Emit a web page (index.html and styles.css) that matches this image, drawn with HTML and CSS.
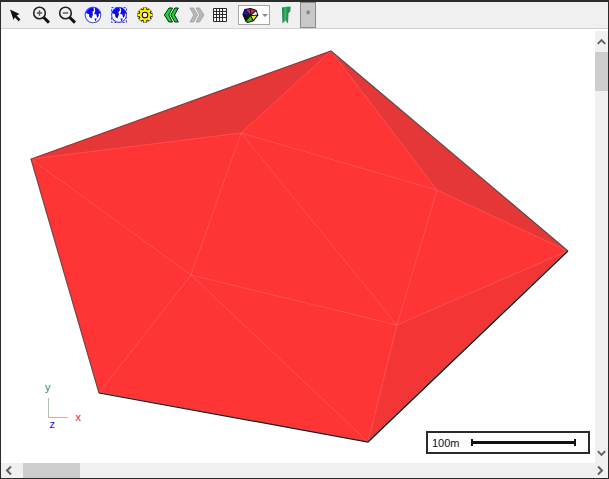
FILE: index.html
```html
<!DOCTYPE html>
<html lang="en">
<head>
<meta charset="utf-8">
<title>Mesh view</title>
<link rel="stylesheet" href="styles.css">
</head>
<body>
<div class="frame">
  <div class="toolbar">
    <span class="tool">
      <svg class="icon" viewBox="0 0 20 20"><path class="ink" d="M5 4.5 L14.5 9 L11.6 10.4 L15.5 14.4 L13.6 16.2 L9.8 12.2 L8.6 15 Z"/></svg>
    </span>
    <span class="tool">
      <svg class="icon" viewBox="0 0 20 20"><circle class="lens" cx="8.500" cy="8" r="5.800"/><path class="handle" d="M12.800 12.500 L18 17.600"/><path class="sign" d="M5.800 8 H11.200 M8.500 5.300 V10.700"/></svg>
    </span>
    <span class="tool">
      <svg class="icon" viewBox="0 0 20 20"><circle class="lens" cx="8.500" cy="8" r="5.800"/><path class="handle" d="M12.800 12.500 L18 17.600"/><path class="sign" d="M5.800 8 H11.200"/></svg>
    </span>
    <span class="tool">
      <svg class="icon" viewBox="0 0 20 20"><circle class="globe-ring" cx="10" cy="10" r="7.800"/><path class="globe-land" d="M3 8 C4 4.500 7 2.400 10.400 2.400 L11 5.400 L9.400 7 L10 9.400 L8.400 13.400 L6.400 12 L6 9.200 Z M11.800 2.600 C14.400 3.200 17 5.600 17.600 9 L15.800 8.200 L15.800 11 L14.200 13 L13.400 9.400 L11.200 9 L12.200 6 Z M11.400 13.400 L13.800 13.600 L12.400 16.400 Z"/></svg>
    </span>
    <span class="tool">
      <svg class="icon" viewBox="0 0 20 20"><rect class="select-box" x="2.500" y="2.500" width="15" height="15"/><circle class="globe-ring" cx="10" cy="10" r="7.400"/><path class="globe-land" d="M3 8 C4 4.500 7 2.400 10.400 2.400 L11 5.400 L9.400 7 L10 9.400 L8.400 13.400 L6.400 12 L6 9.200 Z M11.800 2.600 C14.400 3.200 17 5.600 17.600 9 L15.800 8.200 L15.800 11 L14.200 13 L13.400 9.400 L11.200 9 L12.200 6 Z M11.400 13.400 L13.800 13.600 L12.400 16.400 Z"/></svg>
    </span>
    <span class="tool">
      <svg class="icon" viewBox="0 0 20 20"><path class="gear-teeth" d="M10 2.500 V17.500 M2.500 10 H17.500 M4.700 4.700 L15.300 15.300 M15.300 4.700 L4.700 15.300"/><circle class="gear-body" cx="10" cy="10" r="6"/><path class="gear-fill" d="M10 2.800 V17.200 M2.800 10 H17.200 M4.900 4.900 L15.100 15.100 M15.100 4.900 L4.900 15.100"/><circle class="gear-core" cx="10" cy="10" r="5.400"/><circle class="gear-hole" cx="10" cy="10" r="2.800"/></svg>
    </span>
    <span class="tool">
      <svg class="icon" viewBox="0 0 20 20"><path class="chev-green" d="M8 3 H11.500 L7.800 10 L11.500 17 H8 L3.400 10 Z M13.800 3 H17.300 L13.500 10 L17.300 17 H13.800 L9.800 10 Z"/></svg>
    </span>
    <span class="tool">
      <svg class="icon" viewBox="0 0 20 20"><path class="chev-grey" d="M3 3 H6.500 L10.600 10 L6.500 17 H3 L6.800 10 Z M9 3 H12.500 L17 10 L12.500 17 H9 L12.800 10 Z"/></svg>
    </span>
    <span class="tool tool-grid">
      <svg class="icon" viewBox="0 0 20 20"><path class="grid-lines" d="M3.500 3.500 H16.500 V16.500 H3.500 Z M3.500 6.500 H16.500 M3.500 9.500 H16.500 M3.500 12.500 H16.500 M6.500 3.500 V16.500 M9.500 3.500 V16.500 M12.500 3.500 V16.500"/></svg>
    </span>
    <span class="combo">
      <svg class="pie" viewBox="0 0 18 18">
        <path class="pie-red" d="M9 9 L9 1.500 L15 3.500 Z"/>
        <path class="pie-purple" d="M9 9 L3 2.600 L9 1.500 Z"/>
        <path class="pie-blue" d="M9 9 L1 8 L3 2.600 Z"/>
        <path class="pie-black" d="M9 9 L4 15 L1 8 Z"/>
        <path class="pie-green" d="M9 9 L12 14.600 L6 16.400 L4 15 Z"/>
        <path class="pie-yellow" d="M9 9 L16.800 8.600 L12 14.600 Z"/>
        <path class="pie-white" d="M9 9 L15 3.500 L16.800 8.600 Z"/>
        <path class="pie-edge" d="M9 1.500 L15 3.500 L16.800 8.600 L12 14.600 L6 16.400 L4 15 L1 8 L3 2.600 Z M9 9 L9 1.500 M9 9 L3 2.600 M9 9 L1 8 M9 9 L4 15 M9 9 L12 14.600 M9 9 L16.800 8.600 M9 9 L15 3.500"/>
      </svg>
      <span class="caret"></span>
    </span>
    <span class="tool tool-mark">
      <svg class="icon" viewBox="0 0 20 20">
        <defs>
          <linearGradient id="markShade" x1="0" x2="1" y1="0" y2="0">
            <stop offset="0" stop-color="#0f6f38"/>
            <stop offset=".35" stop-color="#3fb872"/>
            <stop offset=".7" stop-color="#14893f"/>
            <stop offset="1" stop-color="#5cbc84"/>
          </linearGradient>
        </defs>
        <path class="mark-fill" d="M6 2.500 C9 1.500 12 2 15 1.500 L14.500 6.500 L12.500 8 L12 18.500 L9.500 15.500 L6.500 18.500 Z"/>
      </svg>
    </span>
    <span class="overflow">*</span>
  </div>
  <div class="workspace">
    <div class="canvas">
      <svg class="scene" viewBox="0 0 594 433" aria-label="Triangulated surface">
        <g transform="translate(-1 -29)">
          <polygon class="face" points="31,159 331,51 568,251 368,442 99,393"/>
          <polygon class="face-dark" points="31,159 331,51 241,133"/>
          <polygon class="face-dark" points="331,51 568,251 437,190"/>
          <polygon class="face-mid" points="397,325 568,251 368,442"/>
          <path class="edge" d="M31 159 L241 133 L331 51 L437 190 L568 251 L397 325 L368 442 M241 133 L437 190 L397 325 L191 275 L241 133 L397 325 M31 159 L191 275 L99 393 M191 275 L368 442"/>
          <path class="rim-top" d="M99 393 L31 159 L331 51 L568 251"/>
          <path class="rim-low" d="M568 251 L368 442 L99 393"/>
          <path class="axis-y" d="M48.500 398 V417"/>
          <path class="axis-x" d="M48 417.500 H68"/>
          <text class="label label-y" x="45" y="391">y</text>
          <text class="label label-x" x="75.500" y="421">x</text>
          <text class="label label-z" x="49.500" y="428">z</text>
        </g>
      </svg>
      <div class="legend">
        <span class="legend-text">100m</span>
        <span class="legend-bar"></span>
      </div>
    </div>
    <div class="vscroll">
      <span class="arrow"><svg viewBox="0 0 14 21"><path class="chev" d="M3 13 L7 9 L11 13"/></svg></span>
      <span class="vthumb"></span>
      <span class="vspace"></span>
      <span class="arrow"><svg viewBox="0 0 14 21"><path class="chev" d="M3 9 L7 13 L11 9"/></svg></span>
    </div>
  </div>
  <div class="hscroll">
    <span class="arrow-h"><svg viewBox="0 0 22 15"><path class="chev" d="M10 3.500 L6 7.500 L10 11.500"/></svg></span>
    <span class="hthumb"></span>
    <span class="hspace"></span>
    <span class="arrow-h"><svg viewBox="0 0 22 15"><path class="chev" d="M12 3.500 L16 7.500 L12 11.500"/></svg></span>
  </div>
</div>
</body>
</html>
```
FILE: styles.css
```css
* { box-sizing: border-box; }
html, body { margin: 0; padding: 0; background: #fff; }
body { width: 609px; height: 479px; overflow: hidden; font-family: "Liberation Sans", Arial, sans-serif; }

.frame {
  width: 609px;
  height: 479px;
  display: flex;
  flex-direction: column;
  border: 1px solid #2b2b2b;
  border-top-width: 2px;
  background: #fff;
}

.toolbar {
  height: 27px;
  flex: none;
  display: flex;
  align-items: center;
  padding-left: 1px;
  background: #f0f0f0;
  border-bottom: 1px solid #d0d0d0;
}
.tool { width: 26px; height: 26px; display: flex; align-items: center; justify-content: center; flex: none; }
.tool-grid { width: 20px; }
.tool-mark { width: 20px; margin-left: 6px; }
.icon { width: 20px; height: 20px; display: block; }

.ink { fill: #111; }
.lens { fill: #f0f0f0; stroke: #222; stroke-width: 1.6; }
.handle { stroke: #111; stroke-width: 3; fill: none; }
.sign { stroke: #555; stroke-width: 1.4; fill: none; }
.globe-ring { fill: #fff; stroke: #4a4aff; stroke-width: 1.1; }
.globe-land { fill: #0a0aee; }
.select-box { fill: #d6d6ff; stroke: #3a3aff; stroke-width: 1; stroke-dasharray: 2 2; }
.gear-teeth { stroke: #111; stroke-width: 4.4; fill: none; }
.gear-body { fill: #111; }
.gear-fill { stroke: #ffee00; stroke-width: 2.6; fill: none; }
.gear-core { fill: #ffee00; }
.gear-hole { fill: #f6f6c8; stroke: #111; stroke-width: 1.1; }
.chev-green { fill: #12d832; stroke: #0a2a10; stroke-width: 1; }
.chev-grey { fill: #b8b8b8; stroke: #9a9a9a; stroke-width: .8; }
.grid-lines { fill: #fafafa; stroke: #2c2c2c; stroke-width: 1; }

.combo {
  width: 32px;
  height: 20px;
  flex: none;
  margin-left: 8px;
  display: flex;
  align-items: center;
  gap: 3px;
  padding-left: 3px;
  background: #fff;
  border: 1px solid #a6a6a6;
}
.pie { width: 17px; height: 17px; display: block; }
.pie-red { fill: #e8202c; }
.pie-purple { fill: #a020c8; }
.pie-blue { fill: #1414e0; }
.pie-black { fill: #141414; }
.pie-green { fill: #30d010; }
.pie-yellow { fill: #f4f000; }
.pie-white { fill: #fff; }
.pie-edge { fill: none; stroke: #111; stroke-width: 1.1; }
.caret { width: 0; height: 0; border-left: 3.5px solid transparent; border-right: 3.5px solid transparent; border-top: 3.5px solid #8a8a8a; }

.mark-fill { fill: url(#markShade); }

.overflow {
  width: 16px;
  height: 26px;
  flex: none;
  margin-left: 4px;
  background: #c8c8c8;
  border: 1px solid #8a8a8a;
  color: #666;
  font-size: 12px;
  line-height: 24px;
  text-align: center;
}

.workspace { flex: 1; min-height: 0; display: flex; }
.canvas { position: relative; flex: 1; min-width: 0; background: #fff; }
.scene { display: block; width: 594px; height: 433px; }

.face { fill: #ff3535; }
.face-dark { fill: #e53737; }
.face-mid { fill: #f33535; }
.edge { fill: none; stroke: #ff6a6a; stroke-width: .5; }
.rim-top { fill: none; stroke: #555; stroke-width: 1.2; }
.rim-low { fill: none; stroke: #301414; stroke-width: 1.2; }
.axis-y { stroke: #a9c4a9; stroke-width: 1; fill: none; }
.axis-x { stroke: #f0a0a0; stroke-width: 1; fill: none; }
.label { font-size: 11px; font-family: "Liberation Sans", Arial, sans-serif; }
.label-y { fill: #2a8a70; }
.label-x { fill: #f02020; }
.label-z { fill: #1414f0; }

.legend {
  position: absolute;
  left: 425px;
  top: 402px;
  width: 164px;
  height: 23px;
  display: flex;
  align-items: center;
  gap: 12px;
  padding-left: 4px;
  background: #fff;
  border: 2px solid #2b2b2b;
}
.legend-text { font-size: 11px; color: #111; line-height: 14px; width: 27px; }
.legend-bar {
  width: 105px;
  height: 7px;
  border-left: 2px solid #111;
  border-right: 2px solid #111;
  background: linear-gradient(#111, #111) center / 100% 3px no-repeat;
}

.vscroll { width: 13px; flex: none; display: flex; flex-direction: column; background: #f0f0f0; margin-top: 2px; }
.arrow { height: 21px; flex: none; display: block; }
.arrow svg { display: block; width: 13px; height: 21px; }
.vthumb { height: 39px; flex: none; background: #cdcdcd; }
.vspace { flex: 1; }

.hscroll { height: 15px; flex: none; display: flex; background: #f0f0f0; }
.arrow-h { width: 22px; flex: none; display: block; }
.arrow-h svg { display: block; width: 22px; height: 15px; }
.hthumb { width: 57px; flex: none; background: #cdcdcd; }
.hspace { flex: 1; }
.chev { fill: none; stroke: #606060; stroke-width: 2; }
```
